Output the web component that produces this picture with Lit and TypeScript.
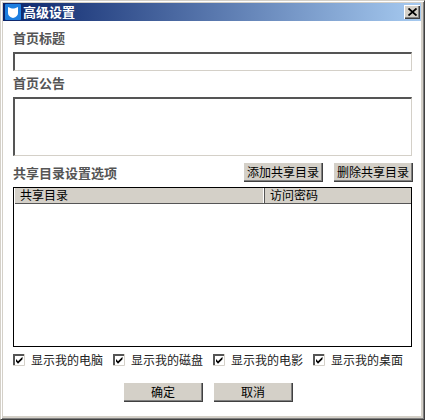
import { LitElement, html, css } from "lit";
import { customElement } from "lit/decorators.js";

@customElement("app-root")
export class AppRoot extends LitElement {
  static styles = css`
    :host { display: block; width: 425px; height: 420px; overflow: hidden; font-family: "Noto Sans CJK SC", "Liberation Sans", sans-serif; font-size: 12px; color: #000; }
    * { box-sizing: border-box; }
    .win {
      width: 425px; height: 420px; background: #d4d0c8; display: flex; flex-direction: column;
      border-top: 1px solid #d4d0c8; border-left: 1px solid #d4d0c8; border-right: 1px solid #404040; border-bottom: 1px solid #404040;
      box-shadow: inset 1px 1px 0 #fff, inset -1px -1px 0 #808080; padding: 2px 3px 3px 2px;
    }
    .title {
      height: 18px; flex: none; display: flex; align-items: center; padding: 0 1px 0 2px;
      background: linear-gradient(90deg, #0a246a, #a6caf0); color: #fff; font-weight: 700; font-size: 13px; line-height: 18px;
    }
    .logo { width: 16px; height: 16px; flex: none; margin-right: 2px; display: block; }
    .title .t { flex: 1; }
    .close {
      width: 16px; height: 14px; background: #d4d0c8; display: flex; align-items: center; justify-content: center;
      box-shadow: inset 1px 1px 0 #fff, inset -1px -1px 0 #404040, inset -2px -2px 0 #808080;
    }
    .close svg { display: block; }
    .body { flex: 1; background: #fff; padding: 9px 9px 0 10px; display: flex; flex-direction: column; }
    .label { font-weight: 700; color: #555; font-size: 13px; line-height: 16px; height: 16px; }
    .input, .area {
      background: #fff; border-top: 2px solid #555; border-left: 2px solid #555; border-right: 1px solid #d4d0c8; border-bottom: 1px solid #d4d0c8;
      width: 399px;
    }
    .input { height: 19px; margin-top: 6px; }
    .area { height: 59px; margin-top: 6px; }
    .l2 { margin-top: 4px; }
    .row { display: flex; align-items: center; height: 20px; margin-top: 6px; width: 400px; }
    .row .label { flex: 1; height: 18px; padding-top: 2px; }
    .btn {
      height: 20px; width: 80px; background: #d4d0c8; color: #000; font-size: 12px; display: flex; align-items: center; justify-content: center;
      line-height: 20px;
      box-shadow: inset 1px 1px 0 #fff, inset -1px -1px 0 #404040, inset -2px -2px 0 #808080;
    }
    .row .btn + .btn { margin-left: 10px; }
    .table { width: 399px; height: 160px; margin-top: 5px; border: 1px solid #000; background: #fff; }
    .head { height: 16px; display: flex; background: #d4d0c8; line-height: 14px; font-size: 12px; border-bottom: 1px solid #555; margin-left: 1px; }
    .c1 { width: 250px; padding-left: 5px; border-right: 1px solid #555; box-shadow: inset -1px 0 0 #fff; }
    .c2 { flex: 1; padding-left: 5px; }
    .checks { display: flex; height: 13px; margin-top: 6px; width: 400px; }
    .check { display: flex; align-items: center; width: 100px; line-height: 13px; font-size: 12px; color: #222; }
    .box { width: 12px; height: 12px; flex: none; margin-right: 6px; display: block; }
    .actions { display: flex; gap: 10px; margin-top: 16px; padding-left: 110px; }
  `;

  private check(text: string) {
    return html`<div class="check">
      <svg class="box" viewBox="0 0 12 12">
        <rect width="12" height="12" fill="#fff"/>
        <path d="M1 12V1H12" fill="none" stroke="#555" stroke-width="2"/>
        <path d="M0 11.5H11.5V0" fill="none" stroke="#d4d0c8"/>
        <path d="M3 5L5 7.2L9.5 2.8V5.2L5 9.8L3 7.5Z" fill="#000"/>
      </svg>${text}</div>`;
  }

  render() {
    return html`<div class="win">
      <div class="title">
        <svg class="logo" viewBox="0 0 16 16">
          <rect width="16" height="16" rx="1" fill="#1d7fe0"/>
          <path d="M3 3L6 4.2Q8 5 10 4.2L13 3V9Q13 12.5 8 14Q3 12.5 3 9Z" fill="#fff"/>
        </svg>
        <span class="t">高级设置</span>
        <div class="close">
          <svg width="9" height="8" viewBox="0 0 9 8"><path d="M0.5 0.5L8.5 7.5M8.5 0.5L0.5 7.5" stroke="#000" stroke-width="1.8" fill="none"/></svg>
        </div>
      </div>
      <div class="body">
        <div class="label">首页标题</div>
        <div class="input"></div>
        <div class="label l2">首页公告</div>
        <div class="area"></div>
        <div class="row">
          <div class="label">共享目录设置选项</div>
          <div class="btn">添加共享目录</div>
          <div class="btn">删除共享目录</div>
        </div>
        <div class="table">
          <div class="head"><div class="c1">共享目录</div><div class="c2">访问密码</div></div>
        </div>
        <div class="checks">
          ${this.check("显示我的电脑")}${this.check("显示我的磁盘")}${this.check("显示我的电影")}${this.check("显示我的桌面")}
        </div>
        <div class="actions"><div class="btn">确定</div><div class="btn">取消</div></div>
      </div>
    </div>`;
  }
}
